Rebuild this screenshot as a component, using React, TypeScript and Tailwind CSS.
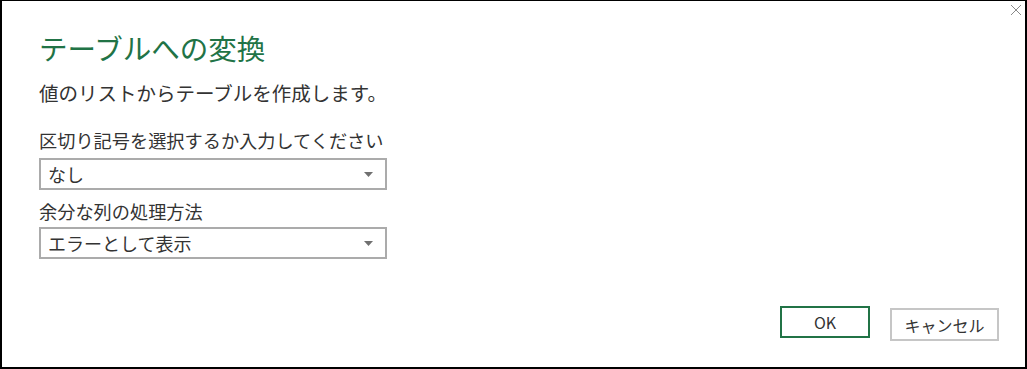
import React from "react";

function Caret() {
  return (
    <svg width="9" height="5" viewBox="0 0 9 5" aria-hidden="true">
      <path d="M0 0h9L4.5 5z" fill="#707070" />
    </svg>
  );
}

function Select({ value }: { value: string }) {
  return (
    <div className="flex h-[32px] w-[348px] items-center justify-between border-2 border-[#ababab] bg-white pl-[7px] pr-[12px]">
      <span className="text-[18px] leading-none text-[#333]">{value}</span>
      <Caret />
    </div>
  );
}

export default function App() {
  return (
    <div
      className="relative flex h-[369px] w-[1027px] flex-col border-b-2 border-l-2 border-r-2 border-t border-black bg-white"
      style={{ fontFamily: '"Segoe UI", "Noto Sans CJK JP", sans-serif' }}
    >
      <svg className="absolute right-[3px] top-[3px]" width="12" height="12" viewBox="0 0 12 12" aria-hidden="true">
        <path d="M1 1l10 10M11 1L1 11" stroke="#8a8a8a" strokeWidth="1" />
      </svg>

      <div className="flex flex-col pl-[37px]">
        <h1 className="mt-[28px] text-[28.5px] leading-[38px] font-normal text-[#217346]">テーブルへの変換</h1>
        <p className="mt-[13px] text-[19.5px] leading-[26px] text-[#333]">値のリストからテーブルを作成します。</p>

        <label className="mt-[22px] text-[18.2px] leading-[24px] text-[#333]">区切り記号を選択するか入力してください</label>
        <div className="mt-[6px]">
          <Select value="なし" />
        </div>

        <label className="mt-[9px] text-[18.2px] leading-[24px] text-[#333]">余分な列の処理方法</label>
        <div className="mt-[4px]">
          <Select value="エラーとして表示" />
        </div>
      </div>

      <div className="mt-auto mb-[26px] flex items-start justify-end gap-[20px] pr-[26px]">
        <button className="h-[32px] w-[90px] border-2 border-[#217346] bg-white text-[16px] text-[#333]">OK</button>
        <button className="mt-[2px] h-[33px] w-[109px] border-2 border-[#c6c6c6] bg-white text-[16px] text-[#333]">
          キャンセル
        </button>
      </div>
    </div>
  );
}
